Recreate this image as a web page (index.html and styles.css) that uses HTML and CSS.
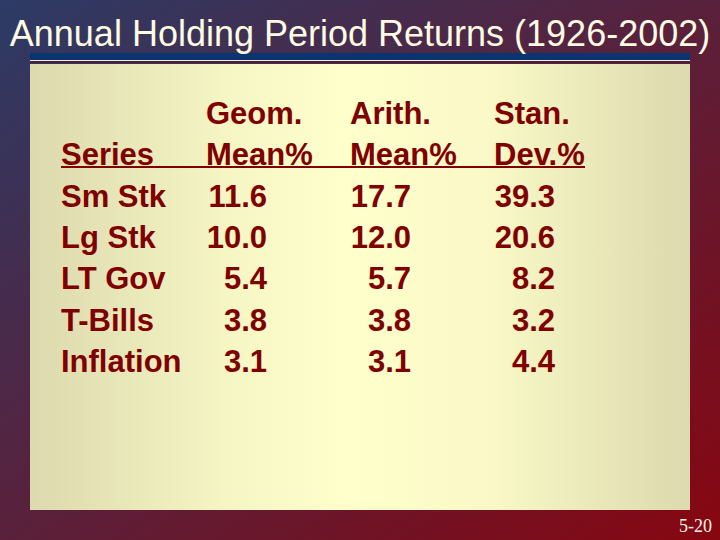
FILE: index.html
```html
<!DOCTYPE html>
<html lang="en">
<head>
    <meta charset="UTF-8">
    <title>Annual Holding Period Returns</title>
    <link rel="stylesheet" href="styles.css">
</head>
<body>
    <div class="slide">
        <h1 class="title">Annual Holding Period Returns (1926-2002)</h1>
        <div class="rule"></div>

        <div class="panel">
            <div class="returns">
                <div class="row">
                    <span></span>
                    <span>Geom.</span>
                    <span>Arith.</span>
                    <span>Stan.</span>
                </div>
                <div class="row head">
                    <span>Series</span>
                    <span>Mean%</span>
                    <span>Mean%</span>
                    <span>Dev.%</span>
                </div>
                <div class="row">
                    <span>Sm Stk</span>
                    <span class="num">11.6</span>
                    <span class="num">17.7</span>
                    <span class="num">39.3</span>
                </div>
                <div class="row">
                    <span>Lg Stk</span>
                    <span class="num">10.0</span>
                    <span class="num">12.0</span>
                    <span class="num">20.6</span>
                </div>
                <div class="row">
                    <span>LT Gov</span>
                    <span class="num">5.4</span>
                    <span class="num">5.7</span>
                    <span class="num">8.2</span>
                </div>
                <div class="row">
                    <span>T-Bills</span>
                    <span class="num">3.8</span>
                    <span class="num">3.8</span>
                    <span class="num">3.2</span>
                </div>
                <div class="row">
                    <span>Inflation</span>
                    <span class="num">3.1</span>
                    <span class="num">3.1</span>
                    <span class="num">4.4</span>
                </div>
            </div>
        </div>

        <div class="page-no">5-20</div>
    </div>
</body>
</html>
```

FILE: styles.css
```css
body {
    margin: 0;
    font-family: 'Liberation Sans', Arial, sans-serif;
}
.slide {
    width: 720px;
    height: 540px;
    overflow: hidden;
    background: linear-gradient(to bottom right, #2c3b66, #870610);
}
.title {
    margin: 0;
    padding-top: 15px;
    height: 38px;
    line-height: 38px;
    font-size: 36px;
    font-weight: normal;
    color: #fffbe2;
    text-align: center;
    white-space: nowrap;
}
.rule {
    margin: 0 30px;
    height: 11px;
    background: linear-gradient(#0b356e 0 7px, #f2ece6 7px 8px, #4e1e35 8px 10px, transparent 10px);
}
.panel {
    margin: 0 30px;
    height: 446px;
    box-sizing: border-box;
    padding: 29px 31px;
    background: linear-gradient(to right, #dcdaae, #f6f5c4 30%, #ffffcc 48%, #f9f8c6 70%, #dcdaae);
}
.returns {
    color: #800000;
    font-size: 31px;
    font-weight: bold;
    line-height: 41.25px;
}
.row {
    display: grid;
    grid-template-columns: 145px 144px 144px auto;
    width: fit-content;
    white-space: nowrap;
}
.row.head {
    height: 32px;
    border-bottom: 2px solid #800000;
    margin-bottom: 7.5px;
}
.num {
    width: 61px;
    text-align: right;
}
.page-no {
    padding: 6px 8px 0 0;
    text-align: right;
    font-family: 'Liberation Serif', 'Times New Roman', serif;
    font-size: 18px;
    line-height: 20px;
    color: #fff6e6;
}
```
